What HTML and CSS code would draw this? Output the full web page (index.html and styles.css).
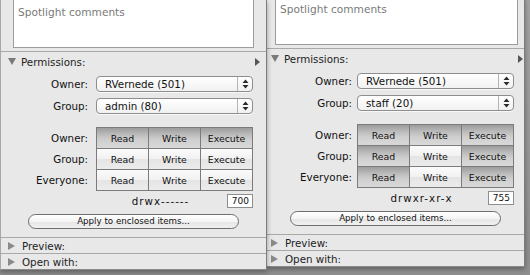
FILE: index.html
```html
<!DOCTYPE html>
<html lang="en">
<head>
    <meta charset="UTF-8">
    <title>Get Info - Permissions</title>
    <link rel="stylesheet" href="styles.css">
</head>
<body>
    <div class="desk">
        <!-- folder owned by admin, mode 700 -->
        <section class="info info-left">
            <div class="comments">Spotlight comments</div>

            <div class="section-head open">
                <span class="tri-down"></span>
                <span class="section-title">Permissions:</span>
                <span class="tri-help"></span>
            </div>

            <div class="perm">
                <div class="form-row">
                    <span class="label">Owner:</span>
                    <div class="popup">RVernede (501)
                        <span class="arrows"><svg width="7" height="10" viewBox="0 0 7 10"><path d="M0.5 4 L3.5 0.5 L6.5 4 Z M0.5 6 L3.5 9.5 L6.5 6 Z" fill="#2a2a2a"/></svg></span>
                    </div>
                </div>
                <div class="form-row">
                    <span class="label">Group:</span>
                    <div class="popup">admin (80)
                        <span class="arrows"><svg width="7" height="10" viewBox="0 0 7 10"><path d="M0.5 4 L3.5 0.5 L6.5 4 Z M0.5 6 L3.5 9.5 L6.5 6 Z" fill="#2a2a2a"/></svg></span>
                    </div>
                </div>

                <div class="access">
                    <div class="access-labels">
                        <span>Owner:</span>
                        <span>Group:</span>
                        <span>Everyone:</span>
                    </div>
                    <div class="access-grid">
                        <div class="seg on">Read</div><div class="seg on">Write</div><div class="seg on">Execute</div>
                        <div class="seg">Read</div><div class="seg">Write</div><div class="seg">Execute</div>
                        <div class="seg">Read</div><div class="seg">Write</div><div class="seg">Execute</div>
                    </div>
                </div>

                <div class="mode-row">
                    <span class="mode">drwx------</span>
                    <span class="octal">700</span>
                </div>

                <div class="apply">Apply to enclosed items...</div>
            </div>

            <div class="section-head">
                <span class="tri-right"></span>
                <span class="section-title">Preview:</span>
            </div>
            <div class="section-head last">
                <span class="tri-right"></span>
                <span class="section-title">Open with:</span>
            </div>
        </section>

        <!-- same folder after chmod 755, group staff -->
        <section class="info info-right">
            <div class="comments">Spotlight comments</div>

            <div class="section-head open">
                <span class="tri-down"></span>
                <span class="section-title">Permissions:</span>
                <span class="tri-help"></span>
            </div>

            <div class="perm">
                <div class="form-row">
                    <span class="label">Owner:</span>
                    <div class="popup">RVernede (501)
                        <span class="arrows"><svg width="7" height="10" viewBox="0 0 7 10"><path d="M0.5 4 L3.5 0.5 L6.5 4 Z M0.5 6 L3.5 9.5 L6.5 6 Z" fill="#2a2a2a"/></svg></span>
                    </div>
                </div>
                <div class="form-row">
                    <span class="label">Group:</span>
                    <div class="popup">staff (20)
                        <span class="arrows"><svg width="7" height="10" viewBox="0 0 7 10"><path d="M0.5 4 L3.5 0.5 L6.5 4 Z M0.5 6 L3.5 9.5 L6.5 6 Z" fill="#2a2a2a"/></svg></span>
                    </div>
                </div>

                <div class="access">
                    <div class="access-labels">
                        <span>Owner:</span>
                        <span>Group:</span>
                        <span>Everyone:</span>
                    </div>
                    <div class="access-grid">
                        <div class="seg on">Read</div><div class="seg on">Write</div><div class="seg on">Execute</div>
                        <div class="seg on">Read</div><div class="seg">Write</div><div class="seg on">Execute</div>
                        <div class="seg on">Read</div><div class="seg">Write</div><div class="seg on">Execute</div>
                    </div>
                </div>

                <div class="mode-row">
                    <span class="mode">drwxr-xr-x</span>
                    <span class="octal">755</span>
                </div>

                <div class="apply">Apply to enclosed items...</div>
            </div>

            <div class="section-head">
                <span class="tri-right"></span>
                <span class="section-title">Preview:</span>
            </div>
            <div class="section-head last">
                <span class="tri-right"></span>
                <span class="section-title">Open with:</span>
            </div>
        </section>
    </div>
</body>
</html>
```

FILE: styles.css
```css
* {
    box-sizing: border-box;
}

body {
    margin: 0;
    width: 530px;
    height: 275px;
    overflow: hidden;
    background: linear-gradient(#a4a4a4, #8e8e8e);
    font-family: "DejaVu Sans", "Lucida Grande", sans-serif;
    font-size: 10.3px;
    color: #111;
}

.desk {
    display: flex;
    align-items: flex-start;
}

.info {
    background-color: #e8e8e8;
    border-right: 1px solid #7c7c7c;
    border-bottom: 1px solid #8a8a8a;
    box-shadow: 0 2px 5px rgba(0, 0, 0, 0.35);
}

.info-left {
    width: 267px;
    border-left: 1px solid #a8a8a8;
    --field-left: 12px;
    --field-width: 241px;
    --head-pad: 6px;
    --help-pad: 6px;
    --label-w: 87px;
    --gap: 8px;
    position: relative;
    z-index: 1;
}

.info-right {
    width: 258px;
    margin-top: -3px;
    --field-left: 8px;
    --field-width: 243px;
    --head-pad: 3px;
    --help-pad: 1px;
    --label-w: 85px;
    --gap: 5px;
}

.comments {
    margin-left: var(--field-left);
    width: var(--field-width);
    height: 48px;
    background-color: #fff;
    border: 1px solid #9c9c9c;
    border-top: none;
    padding: 6px 4px 0;
    color: #7a7a7a;
    font-size: 10.6px;
}

.section-head {
    display: flex;
    align-items: center;
    height: 16px;
    border-top: 1px solid #a9a9a9;
    padding-left: var(--head-pad);
    color: #222;
}

.section-head.open {
    margin-top: 3px;
    height: 20px;
}

.section-title {
    margin-left: 5px;
}

.section-head .tri-right + .section-title {
    margin-left: 7px;
}

.tri-down {
    width: 0;
    height: 0;
    border-left: 4px solid transparent;
    border-right: 4px solid transparent;
    border-top: 7px solid #7a7a7a;
    margin-left: 1px;
}

.tri-right {
    width: 0;
    height: 0;
    border-top: 4px solid transparent;
    border-bottom: 4px solid transparent;
    border-left: 7px solid #8a8a8a;
    margin-left: 1px;
}

.tri-help {
    margin-left: auto;
    margin-right: var(--help-pad);
    width: 0;
    height: 0;
    border-top: 4px solid transparent;
    border-bottom: 4px solid transparent;
    border-left: 5px solid #555;
}

.perm {
    padding-top: 5px;
    padding-bottom: 8px;
}

.form-row {
    display: flex;
    align-items: center;
    margin-bottom: 6px;
}

.label {
    width: var(--label-w);
    text-align: right;
    margin-right: var(--gap);
}

.popup {
    position: relative;
    width: 157px;
    height: 16px;
    line-height: 14px;
    padding-left: 8px;
    border: 1px solid #8e8e8e;
    border-radius: 4px;
    background: linear-gradient(#ffffff, #f1f1f1);
    box-shadow: 0 1px 0 rgba(255, 255, 255, 0.7);
}

.arrows {
    position: absolute;
    right: 0;
    top: 0;
    bottom: 0;
    width: 15px;
    border-left: 1px solid #b4b4b4;
    display: flex;
    align-items: center;
    justify-content: center;
}

.access {
    display: flex;
    margin-top: 13px;
}

.access-labels {
    width: var(--label-w);
    margin-right: var(--gap);
    display: flex;
    flex-direction: column;
    padding-top: 1px;
    text-align: right;
}

.access-labels span {
    height: 21px;
    line-height: 20px;
}

.access-grid {
    display: grid;
    grid-template-columns: repeat(3, 51px);
    grid-auto-rows: 20px;
    gap: 1px;
    padding: 1px;
    width: 157px;
    background-color: #7b7b7b;
}

.seg {
    display: flex;
    align-items: center;
    justify-content: center;
    font-size: 9.4px;
    background: linear-gradient(#fbfbfb 0%, #f1f1f1 50%, #e4e4e4 51%, #ececec 100%);
}

.seg.on {
    background: linear-gradient(#9c9c9c 0%, #bdbdbd 35%, #cfcfcf 60%, #d9d9d9 100%);
}

.mode-row {
    display: flex;
    align-items: center;
    margin-top: 3px;
    margin-left: calc(var(--label-w) + var(--gap));
    width: 157px;
    height: 14px;
}

.mode {
    flex: 1;
    text-align: center;
    letter-spacing: 1px;
    padding-right: 2px;
}

.octal {
    width: 26px;
    height: 14px;
    line-height: 12px;
    background-color: #fff;
    border: 1px solid #8e8e8e;
    text-align: right;
    padding-right: 3px;
    font-size: 9px;
}

.apply {
    width: 211px;
    height: 15px;
    margin: 6px auto 0;
    line-height: 13px;
    text-align: center;
    font-size: 8.7px;
    border: 1px solid #6e6e6e;
    border-radius: 8px;
    background: linear-gradient(#ffffff 0%, #f4f4f4 50%, #e6e6e6 51%, #f0f0f0 100%);
}
```
